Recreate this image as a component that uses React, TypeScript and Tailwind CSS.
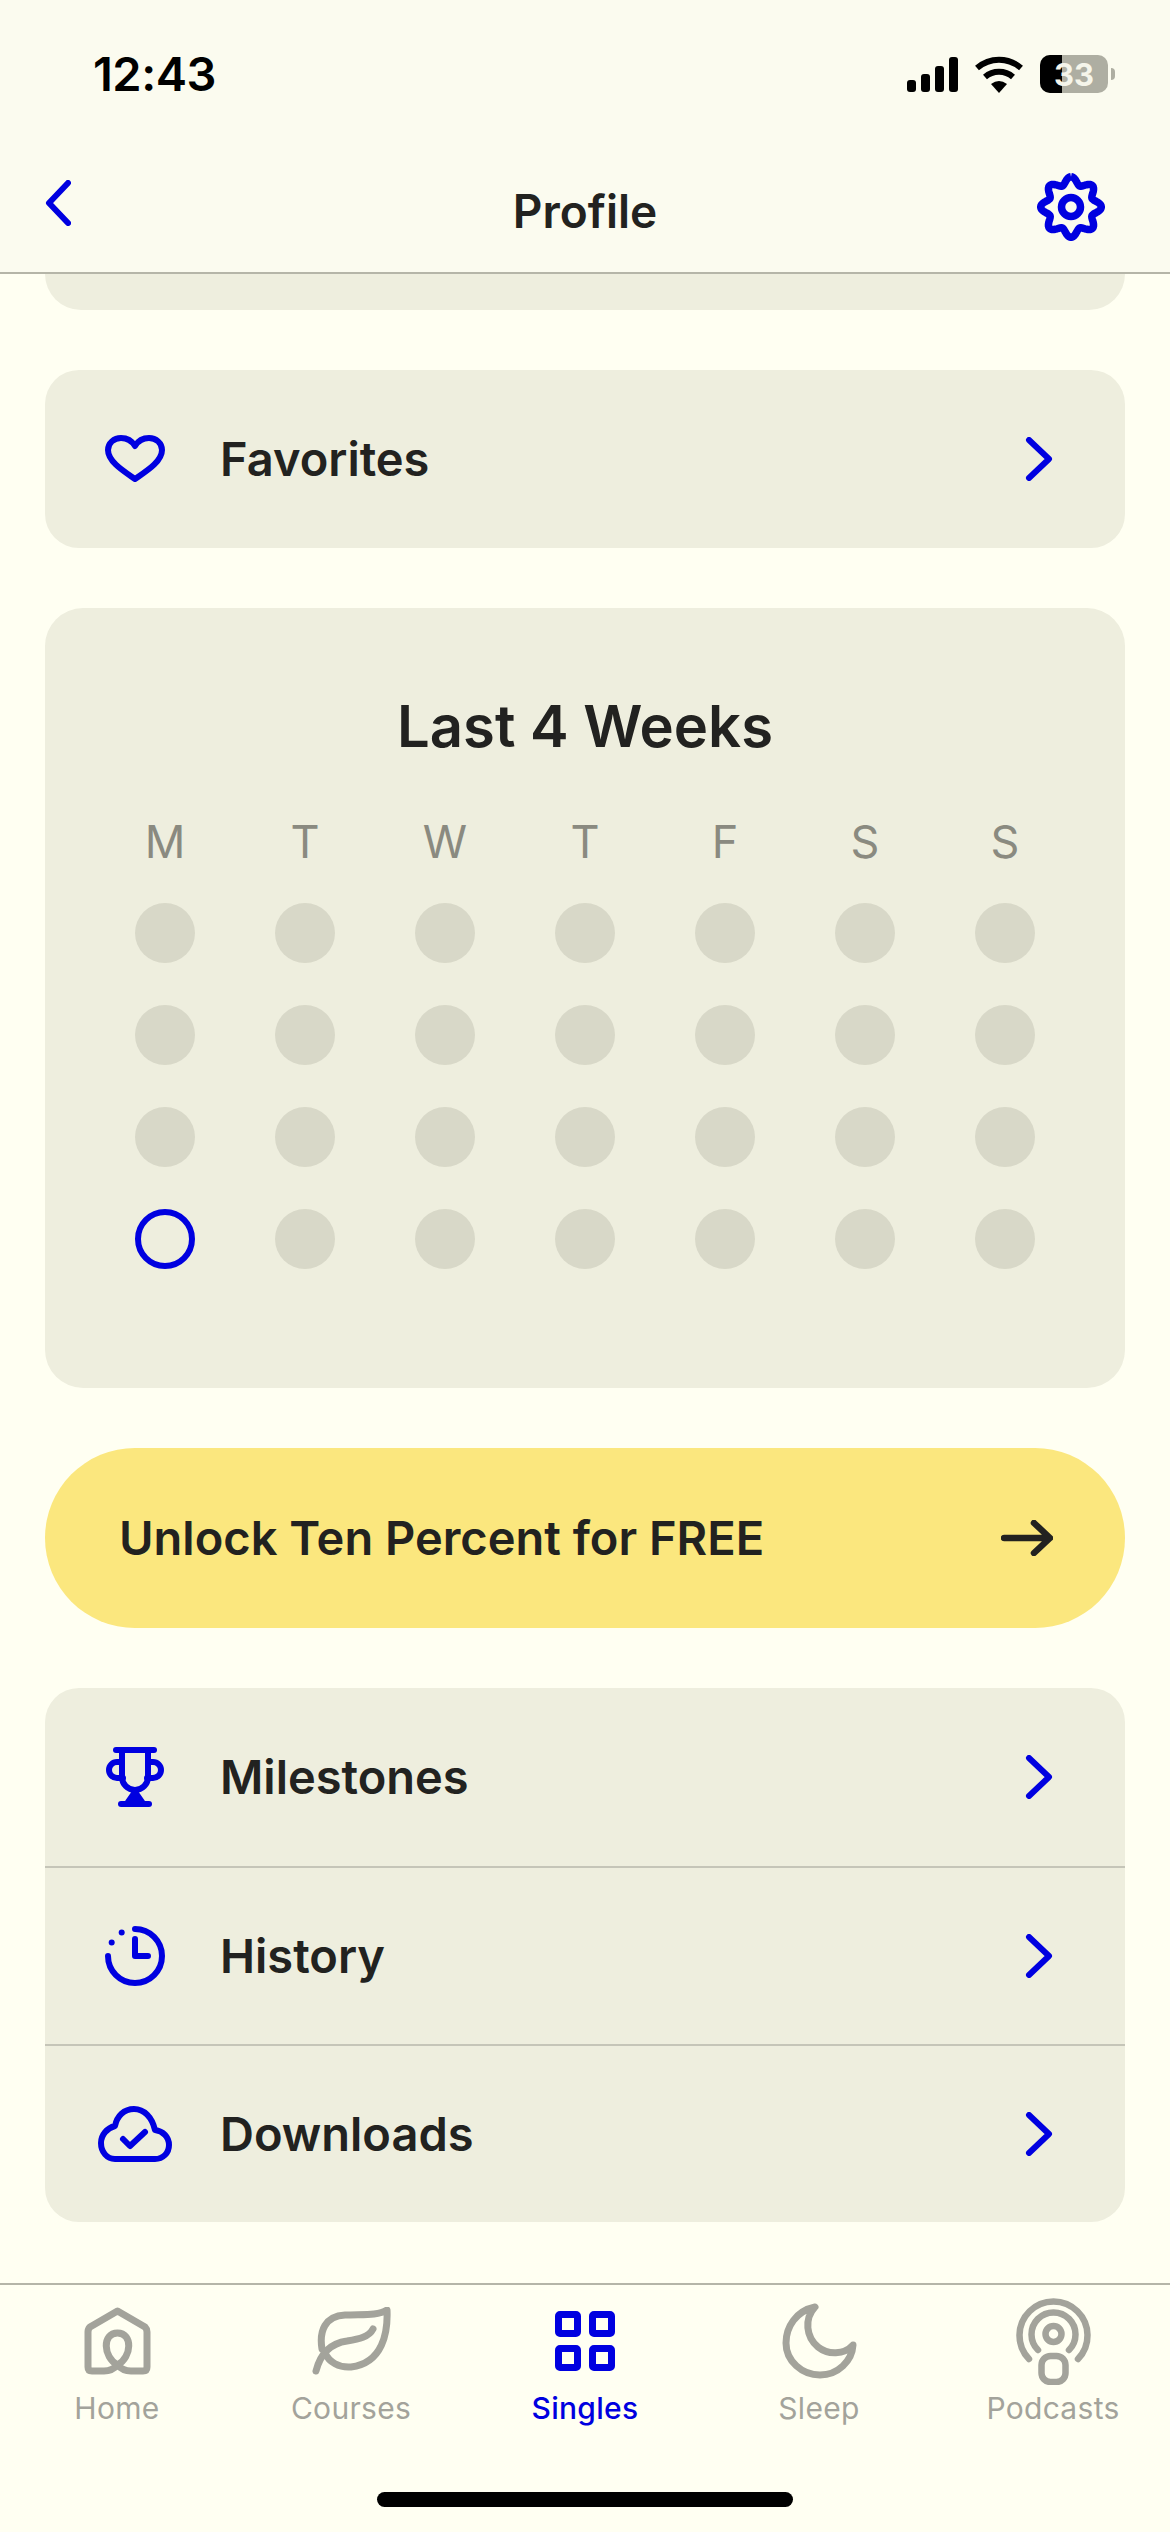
import type { ReactNode } from "react";

const BLUE = "#0000e0";

// Scalloped outline for the settings gear, 8 soft teeth with one on top.
const gearPath = Array.from({ length: 145 }, (_, i) => {
  const t = (i / 144) * Math.PI * 2;
  const r = 26.5 + 3.8 * Math.cos(8 * t);
  const x = 34 + r * Math.sin(t);
  const y = 34 - r * Math.cos(t);
  return `${i === 0 ? "M" : "L"}${x.toFixed(2)} ${y.toFixed(2)}`;
}).join(" ");

function Chevron() {
  return (
    <svg width="28" height="44" viewBox="0 0 28 44" fill="none" stroke={BLUE} strokeWidth="6" strokeLinecap="round" strokeLinejoin="round">
      <path d="M4 3 L24 22 L4 41" />
    </svg>
  );
}

function Heart() {
  return (
    <svg width="60" height="48" viewBox="0 0 60 48" fill="none" stroke={BLUE} strokeWidth="6" strokeLinejoin="round">
      <path d="M30 44 C20 37 3 27 3 15 C3 8 9 3 16 3 C22 3 27 6 30 11 C33 6 38 3 44 3 C51 3 57 8 57 15 C57 27 40 37 30 44 Z" />
    </svg>
  );
}

function Trophy() {
  return (
    <svg width="58" height="60" viewBox="0 0 58 60" fill="none" stroke={BLUE} strokeWidth="6" strokeLinecap="round" strokeLinejoin="round">
      <path d="M10 3 H48" />
      <path d="M16 4 V30 a13 13 0 0 0 26 0 V4" />
      <path d="M16 15 H11 a8 8 0 0 0 0 16 H17" />
      <path d="M42 15 H47 a8 8 0 0 1 0 16 H41" />
      <path d="M29 45 L22 55 H36 Z" fill={BLUE} />
      <path d="M15 57 H43" />
    </svg>
  );
}

function Clock() {
  return (
    <svg width="60" height="60" viewBox="0 0 60 60" fill="none" stroke={BLUE} strokeWidth="6" strokeLinecap="round" strokeLinejoin="round">
      <path d="M3 30 A27 27 0 1 0 30 3" />
      <path d="M30 13 V30 H43" />
      <circle cx="16.7" cy="6.5" r="3" fill={BLUE} stroke="none" />
      <circle cx="6.7" cy="16.5" r="3" fill={BLUE} stroke="none" />
    </svg>
  );
}

function CloudCheck() {
  return (
    <svg width="74" height="56" viewBox="0 0 74 56" fill="none" stroke={BLUE} strokeWidth="6" strokeLinecap="round" strokeLinejoin="round">
      <path d="M17 53 H57 C65 53 71 47 71 39 C71 31 65 25 57 24 C54 11 46 3 36 3 C26 3 19 10 17 20 C9 22 3 29 3 37 C3 46 9 53 17 53 Z" />
      <path d="M25 33 L32 40 L47 26" />
    </svg>
  );
}

function HomeIcon() {
  return (
    <svg width="67" height="68" viewBox="0 0 67 68" fill="none" stroke="#a3a39b" strokeWidth="7" strokeLinecap="round" strokeLinejoin="round">
      <path d="M33.5 4 L6 20 Q4 22 4 25 V60 Q4 64 8 64 H20 C26 64 30 62 33.5 58 C37 62 41 64 47 64 H59 Q63 64 63 60 V25 Q63 22 61 20 Z" />
      <path d="M33.5 58 C19 50 18 26 33.5 26 C49 26 48 50 33.5 58 Z" />
    </svg>
  );
}

function LeafIcon() {
  return (
    <svg width="80" height="68" viewBox="0 0 80 68" fill="none" stroke="#a3a39b" strokeWidth="7" strokeLinecap="round" strokeLinejoin="round">
      <path d="M11 42 C8 24 14 9 34 8 C50 7 66 9 76 3 C77 25 72 56 40 60 C28 61 18 55 14 46" />
      <path d="M5 64 C10 44 22 36 36 34 C48 32 58 30 62 22" />
    </svg>
  );
}

function GridIcon() {
  return (
    <svg width="60" height="60" viewBox="0 0 60 60" fill="none" stroke={BLUE} strokeWidth="7" strokeLinejoin="round">
      <rect x="3.5" y="3.5" width="19" height="19" rx="1.5" />
      <rect x="37.5" y="3.5" width="19" height="19" rx="1.5" />
      <rect x="3.5" y="37.5" width="19" height="19" rx="1.5" />
      <rect x="37.5" y="37.5" width="19" height="19" rx="1.5" />
    </svg>
  );
}

function MoonIcon() {
  return (
    <svg width="75" height="76" viewBox="0 0 75 76" fill="none" stroke="#a3a39b" strokeWidth="7" strokeLinejoin="round">
      <path d="M33 4 C14 8 4 24 4 40 C4 58 20 72 38 72 C56 72 70 58 71 42 C62 52 46 52 36 44 C24 34 22 16 33 4 Z" />
    </svg>
  );
}

function PodcastIcon() {
  return (
    <svg width="75" height="88" viewBox="0 0 75 88" fill="none" stroke="#a3a39b" strokeWidth="6.5" strokeLinecap="round">
      <path d="M13 62 A34 34 0 1 1 62 62" />
      <path d="M22 53 A22 22 0 1 1 53 53" />
      <circle cx="37.5" cy="37" r="8" />
      <rect x="25.5" y="59" width="24" height="26" rx="9" />
    </svg>
  );
}

function Row({ icon, label, border }: { icon: ReactNode; label: string; border?: boolean }) {
  return (
    <div className={`flex h-[178px] items-center pl-[45px] pr-[72px] ${border ? "border-t-2 border-[#c5c5b8]" : ""}`}>
      <div className="flex w-[90px] justify-center">{icon}</div>
      <span className="ml-[40px] flex-1 text-[47px] font-semibold text-[#222220]">{label}</span>
      <Chevron />
    </div>
  );
}

const days = ["M", "T", "W", "T", "F", "S", "S"];

function Calendar() {
  return (
    <section className="rounded-[38px] bg-[#eeeede] px-[50px] pb-[119px] pt-[84px]">
      <h2 className="text-center text-[58px] font-semibold leading-[68px] text-[#222220]">Last 4 Weeks</h2>
      <div className="mt-[62px] grid grid-cols-7 justify-items-center">
        {days.map((d, i) => (
          <span key={i} className="text-[45px] leading-[40px] text-[#8a8a80]">{d}</span>
        ))}
      </div>
      <div className="mt-[41px] grid grid-cols-7 justify-items-center gap-y-[42px]">
        {Array.from({ length: 28 }, (_, i) => (
          <div
            key={i}
            className={i === 21 ? "size-[60px] rounded-full border-[6px] border-[#0000e0]" : "size-[60px] rounded-full bg-[#d8d8c8]"}
          />
        ))}
      </div>
    </section>
  );
}

const tabs = [
  { label: "Home", icon: <HomeIcon /> },
  { label: "Courses", icon: <LeafIcon /> },
  { label: "Singles", icon: <GridIcon />, active: true },
  { label: "Sleep", icon: <MoonIcon /> },
  { label: "Podcasts", icon: <PodcastIcon /> },
];

export default function App() {
  return (
    <div className="flex h-[2532px] w-[1170px] flex-col overflow-hidden bg-[#fffff2] font-['Inter',sans-serif]">
      <header className="h-[274px] shrink-0 border-b-2 border-[#b5b5a8] bg-[#fbfbef]">
        <div className="flex h-[148px] items-center justify-between pl-[93px] pr-[55px]">
          <span className="text-[47px] font-semibold tracking-[-0.5px] text-black">12:43</span>
          <div className="flex items-center">
            <svg width="51" height="35" viewBox="0 0 51 35" fill="black">
              <rect x="0" y="23" width="9" height="12" rx="3" />
              <rect x="14" y="17" width="9" height="18" rx="3" />
              <rect x="28" y="9" width="9" height="26" rx="3" />
              <rect x="42" y="0" width="9" height="35" rx="3" />
            </svg>
            <svg className="ml-[17px]" width="48" height="37" viewBox="0 0 48 37" fill="none" stroke="black" strokeWidth="6">
              <path d="M2 12 C15 1 33 1 46 12" />
              <path d="M10 21 C18 14 30 14 38 21" />
              <path d="M16 28 Q24 22 32 28 L24 37 Z" fill="black" stroke="none" />
            </svg>
            <div className="relative ml-[17px] flex h-[38px] w-[68px] items-center justify-center rounded-[10px] bg-[#aeaea2]">
              <div className="absolute inset-y-0 left-0 w-[22px] rounded-l-[10px] bg-black" />
              <span className="relative text-[31px] font-bold leading-none text-[#f5f5ea]">33</span>
            </div>
            <div className="ml-[3px] h-[12px] w-[4px] rounded-r-full bg-[#aeaea2]" />
          </div>
        </div>
        <div className="grid grid-cols-3 items-center px-[45px] pt-[29px]">
          <svg className="-mt-[18px]" width="26" height="46" viewBox="0 0 26 46" fill="none" stroke={BLUE} strokeWidth="6" strokeLinecap="round" strokeLinejoin="round">
            <path d="M23 3 L4 23 L23 43" />
          </svg>
          <h1 className="text-center text-[46px] font-semibold text-[#222220]">Profile</h1>
          <svg className="-mt-[10px] mr-[20px] justify-self-end" width="68" height="68" viewBox="0 0 68 68" fill="none" stroke={BLUE} strokeWidth="7.5" strokeLinejoin="round">
            <path d={gearPath} />
            <circle cx="34" cy="34" r="9.5" />
          </svg>
        </div>
      </header>

      <main className="flex flex-1 flex-col gap-[60px] overflow-hidden px-[45px]">
        <div className="h-[36px] shrink-0 rounded-b-[38px] bg-[#eeeede]" />
        <div className="shrink-0 rounded-[34px] bg-[#eeeede]">
          <Row icon={<Heart />} label="Favorites" />
        </div>
        <Calendar />
        <div className="flex h-[180px] shrink-0 items-center justify-between rounded-full bg-[#fbe77e] pl-[74px] pr-[72px]">
          <span className="text-[47px] font-semibold text-[#222220]">Unlock Ten Percent for FREE</span>
          <svg width="52" height="36" viewBox="0 0 52 36" fill="none" stroke="#222220" strokeWidth="6.5" strokeLinecap="round" strokeLinejoin="round">
            <path d="M3 18 H48 M33 3 L49 18 L33 33" />
          </svg>
        </div>
        <div className="shrink-0 rounded-[34px] bg-[#eeeede]">
          <Row icon={<Trophy />} label="Milestones" />
          <Row icon={<Clock />} label="History" border />
          <Row icon={<CloudCheck />} label="Downloads" border />
        </div>
      </main>

      <nav className="h-[249px] shrink-0 border-t-2 border-[#b5b5a8]">
        <div className="grid grid-cols-5">
          {tabs.map((t) => (
            <div key={t.label} className="flex flex-col items-center">
              <div className="flex h-[105px] items-center justify-center pt-[6px]">{t.icon}</div>
              <span className={`text-[30px] leading-[36px] tracking-[0.3px] ${t.active ? "font-medium text-[#0000e0]" : "text-[#a3a39b]"}`}>{t.label}</span>
            </div>
          ))}
        </div>
        <div className="mx-auto mt-[66px] h-[15px] w-[416px] rounded-full bg-black" />
      </nav>
    </div>
  );
}
